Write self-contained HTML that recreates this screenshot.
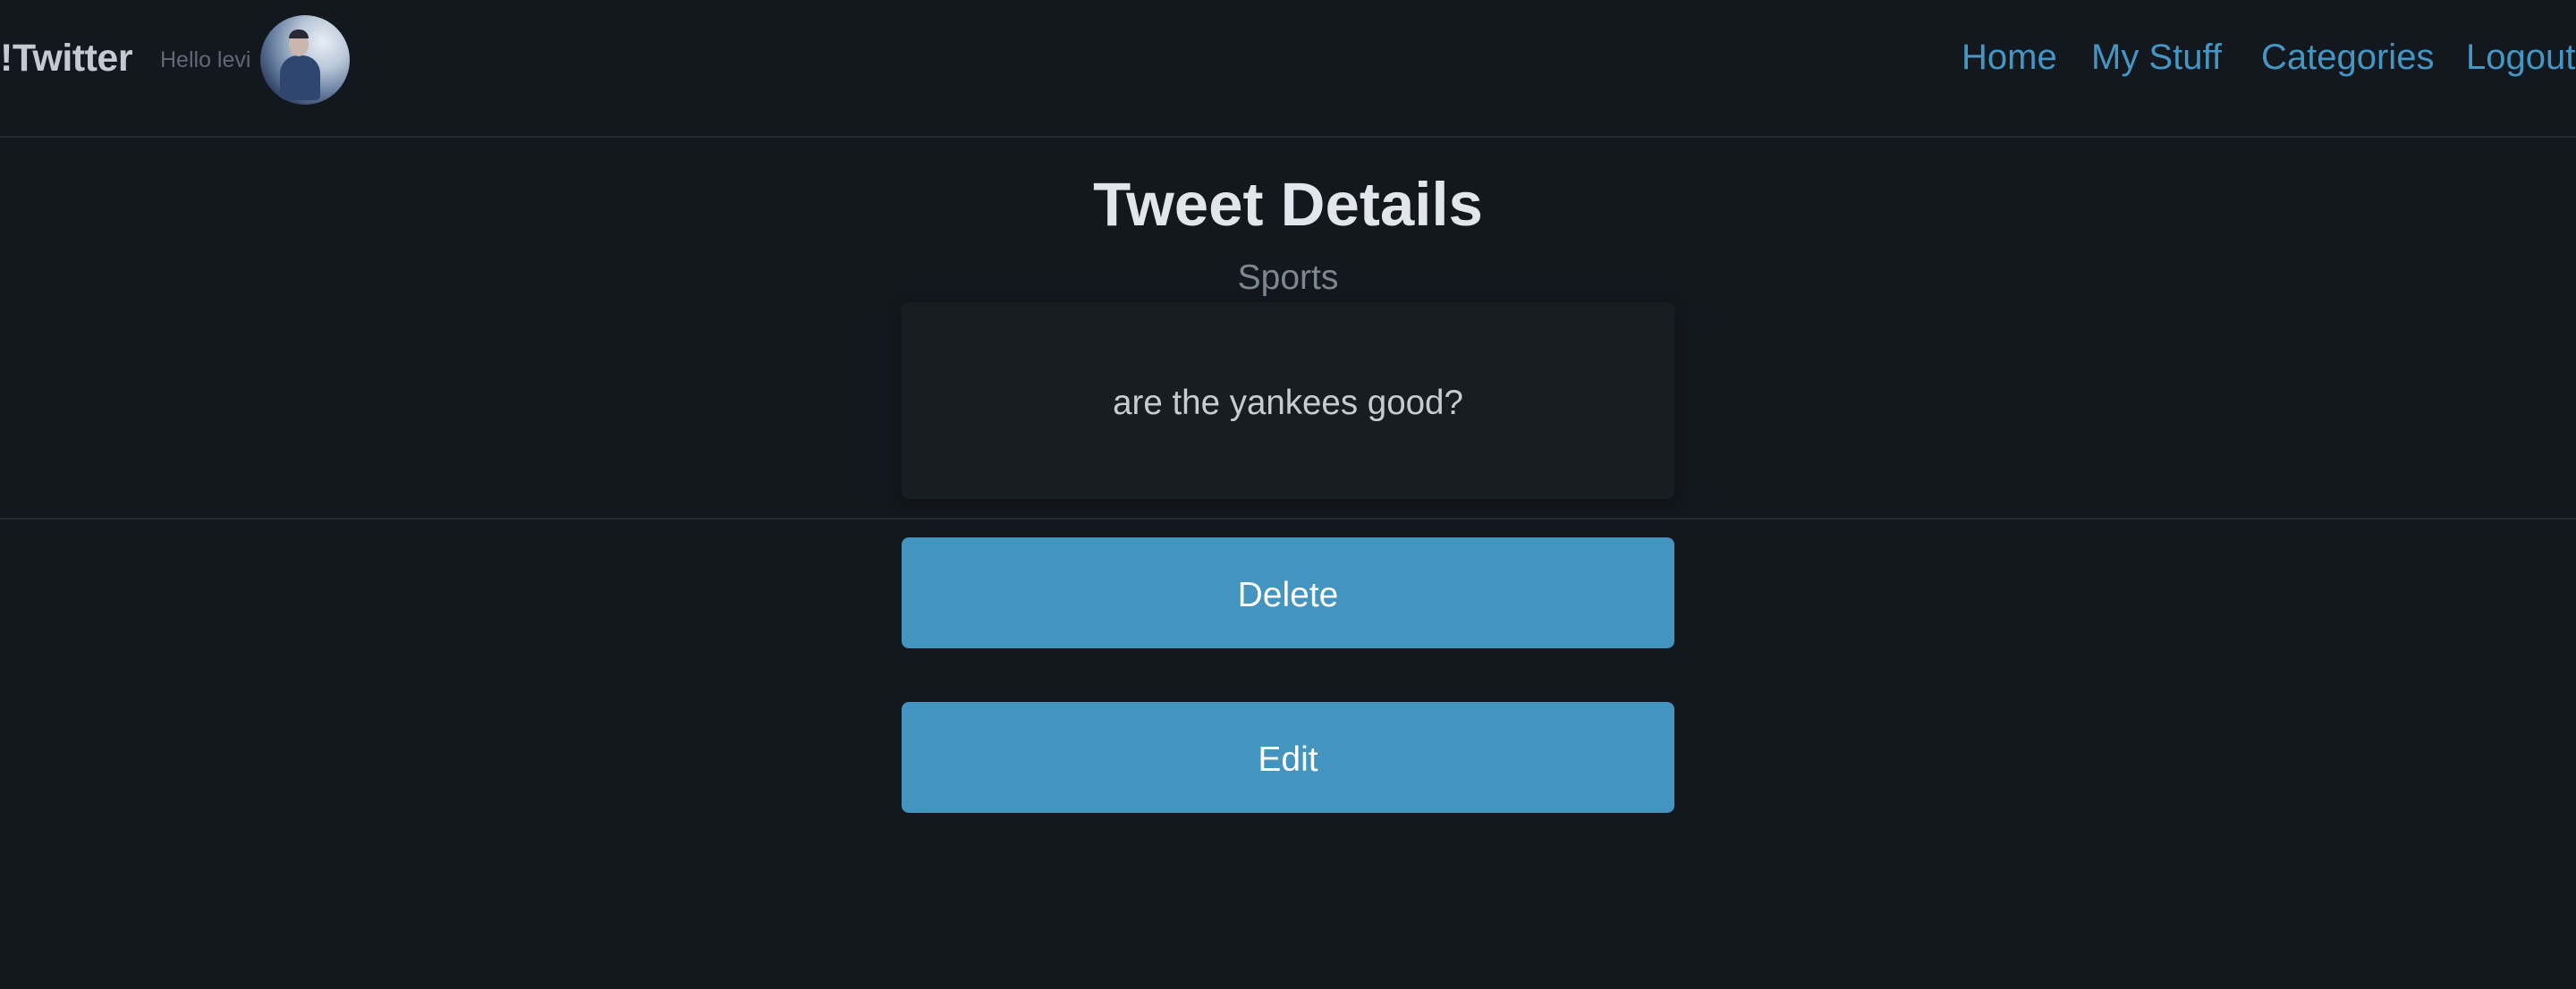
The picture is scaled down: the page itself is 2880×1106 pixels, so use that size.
<!DOCTYPE html>
<html><head><meta charset="utf-8"><style>
html,body{margin:0;padding:0;width:2880px;height:1106px;background:#13171e;overflow:hidden;font-family:"Liberation Sans",Arial,sans-serif;}
.a{position:absolute;white-space:nowrap;line-height:1;}
</style></head><body>
<div class="a" style="left:0;top:44px;font-size:43px;font-weight:bold;color:#c2cad3;letter-spacing:-0.5px;">!Twitter</div>
<div class="a" style="left:179px;top:55px;font-size:25px;color:#5d6977;">Hello levi</div>
<div class="a" style="left:291px;top:17px;width:100px;height:100px;border-radius:50%;overflow:hidden;background:radial-gradient(circle at 70% 30%,#e8eef5 0,#b9c7d8 30%,#6f86a6 55%,#2c3f62 80%);">
<div style="position:absolute;left:22px;top:45px;width:45px;height:50px;background:#2f4770;border-radius:20px 20px 5px 5px;"></div>
<div style="position:absolute;left:32px;top:18px;width:22px;height:28px;background:#c9b7ad;border-radius:50%;"></div>
<div style="position:absolute;left:32px;top:16px;width:22px;height:10px;background:#2a2a34;border-radius:10px 10px 0 0;"></div>
</div>
<div class="a" style="left:2193px;top:44px;font-size:40px;color:#4596c2;">Home</div>
<div class="a" style="left:2338px;top:44px;font-size:40px;color:#4596c2;">My Stuff</div>
<div class="a" style="left:2528px;top:44px;font-size:40px;color:#4596c2;">Categories</div>
<div class="a" style="left:2757px;top:44px;font-size:40px;color:#4596c2;">Logout</div>
<div class="a" style="left:0;top:152px;width:2880px;height:2px;background:#222a33;"></div>
<div class="a" style="left:0;top:194px;width:2880px;text-align:center;font-size:69px;font-weight:bold;color:#e2e6ec;">Tweet Details</div>
<div class="a" style="left:0;top:291px;width:2880px;text-align:center;font-size:39px;color:#7d8790;">Sports</div>
<div class="a" style="left:1008px;top:338px;width:864px;height:220px;background:#171d23;border-radius:8px;box-shadow:0 6px 20px rgba(0,0,0,0.25);"></div>
<div class="a" style="left:1008px;top:432px;width:864px;text-align:center;font-size:38.5px;color:#c8ccd2;">are the yankees good?</div>
<div class="a" style="left:0;top:579px;width:2880px;height:2px;background:#232b34;"></div>
<div class="a" style="left:1008px;top:601px;width:864px;height:124px;background:#4394bf;border-radius:8px;"></div>
<div class="a" style="left:1008px;top:646px;width:864px;text-align:center;font-size:39px;color:#fff;">Delete</div>
<div class="a" style="left:1008px;top:785px;width:864px;height:124px;background:#4394bf;border-radius:8px;"></div>
<div class="a" style="left:1008px;top:830px;width:864px;text-align:center;font-size:39px;color:#fff;">Edit</div>
</body></html>
